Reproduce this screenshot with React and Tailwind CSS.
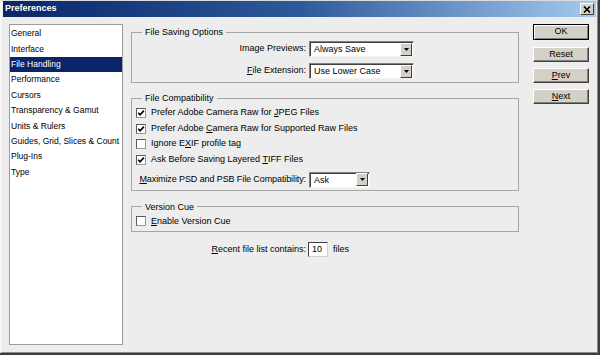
import React from "react";

const CATEGORIES = [
  "General",
  "Interface",
  "File Handling",
  "Performance",
  "Cursors",
  "Transparency & Gamut",
  "Units & Rulers",
  "Guides, Grid, Slices & Count",
  "Plug-Ins",
  "Type",
];

function Check({ checked }) {
  return (
    <span className="w-[10px] h-[10px] bg-white border border-t-[#5a5a5a] border-l-[#5a5a5a] border-b-[#9a9a9a] border-r-[#9a9a9a] flex items-center justify-center shrink-0">
      {checked && (
        <svg width="8" height="8" viewBox="0 0 8 8">
          <path d="M1.2 3.8 L3.1 5.9 L6.9 1.6" fill="none" stroke="#000" strokeWidth="1.6" />
        </svg>
      )}
    </span>
  );
}

function Select({ value, width }) {
  return (
    <div
      className={`${width} h-[16px] bg-white flex items-center border border-t-[#808080] border-l-[#808080] border-b-[#f4f4f4] border-r-[#f4f4f4] shadow-[inset_1px_1px_0_#404040]`}
    >
      <span className="flex-1 pl-[4px] pt-[1px]">{value}</span>
      <span className="w-[12px] h-[13px] mr-[1px] bg-[#d4d0c8] border border-t-white border-l-white border-b-[#404040] border-r-[#404040] flex items-center justify-center">
        <svg width="5" height="3" viewBox="0 0 5 3">
          <path d="M0 0 H5 L2.5 3 Z" fill="#000" />
        </svg>
      </span>
    </div>
  );
}

function CheckRow({ checked, children }) {
  return (
    <div className="h-[15.7px] flex items-center gap-[5px]">
      <Check checked={checked} />
      <span>{children}</span>
    </div>
  );
}

function Group({ title, className, children }) {
  return (
    <fieldset className={`border border-[#a6a6a6] px-[1px] ${className}`}>
      <legend className="ml-[9px] px-[3px] leading-[12px] text-[9px]">{title}</legend>
      {children}
    </fieldset>
  );
}

function Button({ label, primary, className }) {
  return (
    <div
      className={`w-[56px] flex items-center justify-center bg-[#d4d0c8] ${
        primary
          ? "h-[16px] border border-black shadow-[inset_1px_1px_0_#fff,inset_-1px_-1px_0_#808080]"
          : "h-[15px] border border-t-white border-l-white border-b-[#404040] border-r-[#404040] shadow-[inset_-1px_-1px_0_#808080]"
      } ${className || ""}`}
    >
      {label}
    </div>
  );
}

export default function App() {
  return (
    <div className="w-[600px] h-[355px] bg-[#3c3c3c] font-['Liberation_Sans',Arial,sans-serif] text-[9px] text-black overflow-hidden">
      <div className="w-[598px] h-[353px] bg-[#ededed] border-l-2 border-t border-l-[#f7f7f7] border-t-[#dcdcdc] border-r border-b border-r-[#8a8a8a] border-b-[#8a8a8a]">
        {/* title bar */}
        <div className="ml-[1px] mr-[1px] h-[16px] bg-linear-to-r from-[#0a246a] via-[#2d5a9a] to-[#a6caf0] flex items-center justify-between pl-[2px] pr-[2px]">
          <span className="text-white font-bold text-[9px]">Preferences</span>
          <span className="w-[14px] h-[12px] bg-[#d4d0c8] border border-t-white border-l-white border-b-[#404040] border-r-[#404040] flex items-center justify-center">
            <svg width="8" height="7" viewBox="0 0 8 7">
              <path d="M1 0.5 L7 6.5 M7 0.5 L1 6.5" stroke="#000" strokeWidth="1.6" />
            </svg>
          </span>
        </div>

        <div className="flex pl-[7px] pt-[7px]">
          {/* category list */}
          <div className="w-[114px] h-[321px] bg-white border border-[#9c9c9c] pt-[1px] text-[8.5px]">
            {CATEGORIES.map((c) => (
              <div
                key={c}
                className={`h-[15.4px] flex items-center pl-[1px] ${
                  c === "File Handling" ? "bg-[#0a246a] text-white" : ""
                }`}
              >
                {c}
              </div>
            ))}
          </div>

          {/* settings */}
          <div className="ml-[8px] w-[388px] pt-[2px]">
            <Group title="File Saving Options" className="pt-[3px] pb-[3px]">
              <div className="flex items-center">
                <span className="w-[173px] text-right">Image Previews:</span>
                <span className="ml-[3px]">
                  <Select value="Always Save" width="w-[105px]" />
                </span>
              </div>
              <div className="flex items-center mt-[6px]">
                <span className="w-[173px] text-right">
                  <u>F</u>ile Extension:
                </span>
                <span className="ml-[3px]">
                  <Select value="Use Lower Case" width="w-[105px]" />
                </span>
              </div>
            </Group>

            <Group title="File Compatibility" className="mt-[9px] pt-[1px] pb-[2px]">
              <div className="pl-[3px]">
                <CheckRow checked>
                  Prefer Adobe Camera Raw for <u>J</u>PEG Files
                </CheckRow>
                <CheckRow checked>
                  Prefer Adobe <u>C</u>amera Raw for Supported Raw Files
                </CheckRow>
                <CheckRow>
                  Ignore E<u>X</u>IF profile tag
                </CheckRow>
                <CheckRow checked>
                  Ask Before Saving Layered <u>T</u>IFF Files
                </CheckRow>
              </div>
              <div className="flex items-center mt-[4px]">
                <span className="w-[173px] text-right whitespace-nowrap tracking-[-0.1px]">
                  <u>M</u>aximize PSD and PSB File Compatibility:
                </span>
                <span className="ml-[3px]">
                  <Select value="Ask" width="w-[61px]" />
                </span>
              </div>
            </Group>

            <Group title="Version Cue" className="mt-[10px] pt-[1px] pb-[2px]">
              <div className="pl-[3px]">
                <div className="h-[15px] flex items-center gap-[5px]">
                  <Check />
                  <span>
                    <u>E</u>nable Version Cue
                  </span>
                </div>
              </div>
            </Group>

            <div className="flex items-center mt-[10px]">
              <span className="w-[175px] text-right">
                <u>R</u>ecent file list contains:
              </span>
              <span className="ml-[2px] w-[20px] h-[15px] bg-white border border-t-[#404040] border-l-[#404040] border-b-[#d4d0c8] border-r-[#d4d0c8] flex items-center pl-[3px]">
                10
              </span>
              <span className="ml-[5px]">files</span>
            </div>
          </div>

          {/* buttons */}
          <div className="ml-[14px] flex flex-col">
            <Button label="OK" primary />
            <Button label="Reset" className="mt-[7px]" />
            <Button
              label={
                <span>
                  <u>P</u>rev
                </span>
              }
              className="mt-[6px]"
            />
            <Button
              label={
                <span>
                  <u>N</u>ext
                </span>
              }
              className="mt-[6px]"
            />
          </div>
        </div>
      </div>
    </div>
  );
}
